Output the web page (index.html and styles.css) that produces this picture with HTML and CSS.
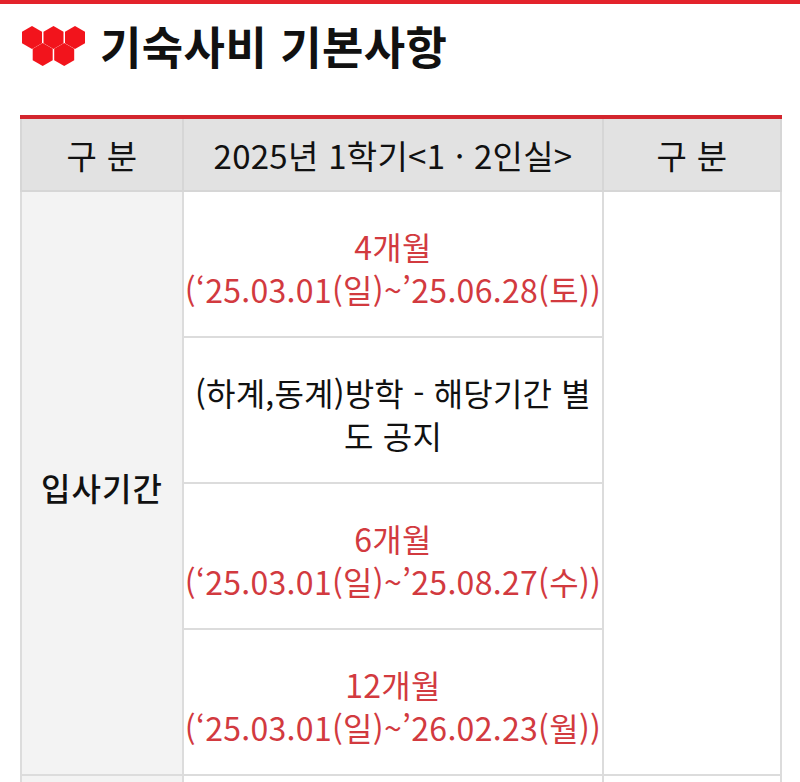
FILE: index.html
```html
<!DOCTYPE html>
<html lang="ko">
<head>
<meta charset="utf-8">
<link rel="stylesheet" href="styles.css">
</head>
<body>
<div class="topbar"></div>
<header class="title">
  <svg class="logo" width="64" height="40" viewBox="0 0 64 40">
    <g fill="#f2141c">
      <polygon points="10,0 20,5.8 20,17.2 10,23 0,17.2 0,5.8"/>
      <polygon points="31.5,0 41.5,5.8 41.5,17.2 31.5,23 21.5,17.2 21.5,5.8"/>
      <polygon points="53,0 63,5.8 63,17.2 53,23 43,17.2 43,5.8"/>
      <polygon points="20.7,17 30.7,22.8 30.7,34.2 20.7,40 10.7,34.2 10.7,22.8"/>
      <polygon points="42.2,17 52.2,22.8 52.2,34.2 42.2,40 32.2,34.2 32.2,22.8"/>
    </g>
  </svg>
  <h1>기숙사비 기본사항</h1>
</header>
<table class="info">
  <colgroup>
    <col class="c1"><col class="c2"><col class="c3">
  </colgroup>
  <thead>
    <tr><th>구 분</th><th>2025년 1학기&lt;1 · 2인실&gt;</th><th>구 분</th></tr>
  </thead>
  <tbody>
    <tr>
      <td class="label" rowspan="4">입사기간</td>
      <td class="red">4개월<br>(‘25.03.01(일)~’25.06.28(토))</td>
      <td class="blank" rowspan="4"></td>
    </tr>
    <tr><td class="black">(하계,동계)방학 - 해당기간 별<br>도 공지</td></tr>
    <tr><td class="red">6개월<br>(‘25.03.01(일)~’25.08.27(수))</td></tr>
    <tr><td class="red">12개월<br>(‘25.03.01(일)~’26.02.23(월))</td></tr>
    <tr>
      <td class="label">&nbsp;</td>
      <td class="black">&nbsp;</td>
      <td class="blank"></td>
    </tr>
  </tbody>
</table>
</body>
</html>
```
FILE: styles.css
```css
html, body {
  margin: 0;
  padding: 0;
  background: #ffffff;
}
body {
  font-family: "Noto Sans CJK KR", "Noto Sans", sans-serif;
  color: #111111;
  overflow: hidden;
}
.topbar {
  height: 4px;
  background: #e3232b;
}
.title {
  display: flex;
  align-items: center;
  gap: 14px;
  padding: 14px 0 0 22px;
  height: 56px;
}
.logo {
  display: block;
  margin-top: 0;
}
.title h1 {
  margin: 0;
  font-size: 45px;
  font-weight: 700;
  letter-spacing: 0.4px;
  line-height: 56px;
  color: #111;
}
.info {
  margin: 41px 0 0 20px;
  width: 760px;
  border-collapse: collapse;
  table-layout: fixed;
  border-top: 4px solid #d3262e;
}
.c1 { width: 162px; }
.c2 { width: 420px; }
.c3 { width: 178px; }
.info th {
  background: #e2e2e2;
  height: 71px;
  font-size: 33px;
  font-weight: 400;
  color: #111;
  border: 2px solid #d6d6d6;
  border-top: none;
  padding: 0;
  text-align: center;
  letter-spacing: 0.3px;
}
.info td {
  border: 2px solid #dcdcdc;
  height: 136px;
  padding: 8px 0 0;
  text-align: center;
  vertical-align: middle;
  font-size: 32px;
  line-height: 43px;
  letter-spacing: 0.3px;
}
.info td.label {
  background: #f3f3f3;
  color: #111;
  font-weight: 500;
  letter-spacing: 1px;
}
.info td.red {
  color: #d23a3f;
}
.info td.black {
  color: #111;
  letter-spacing: 0.2px;
}
```
